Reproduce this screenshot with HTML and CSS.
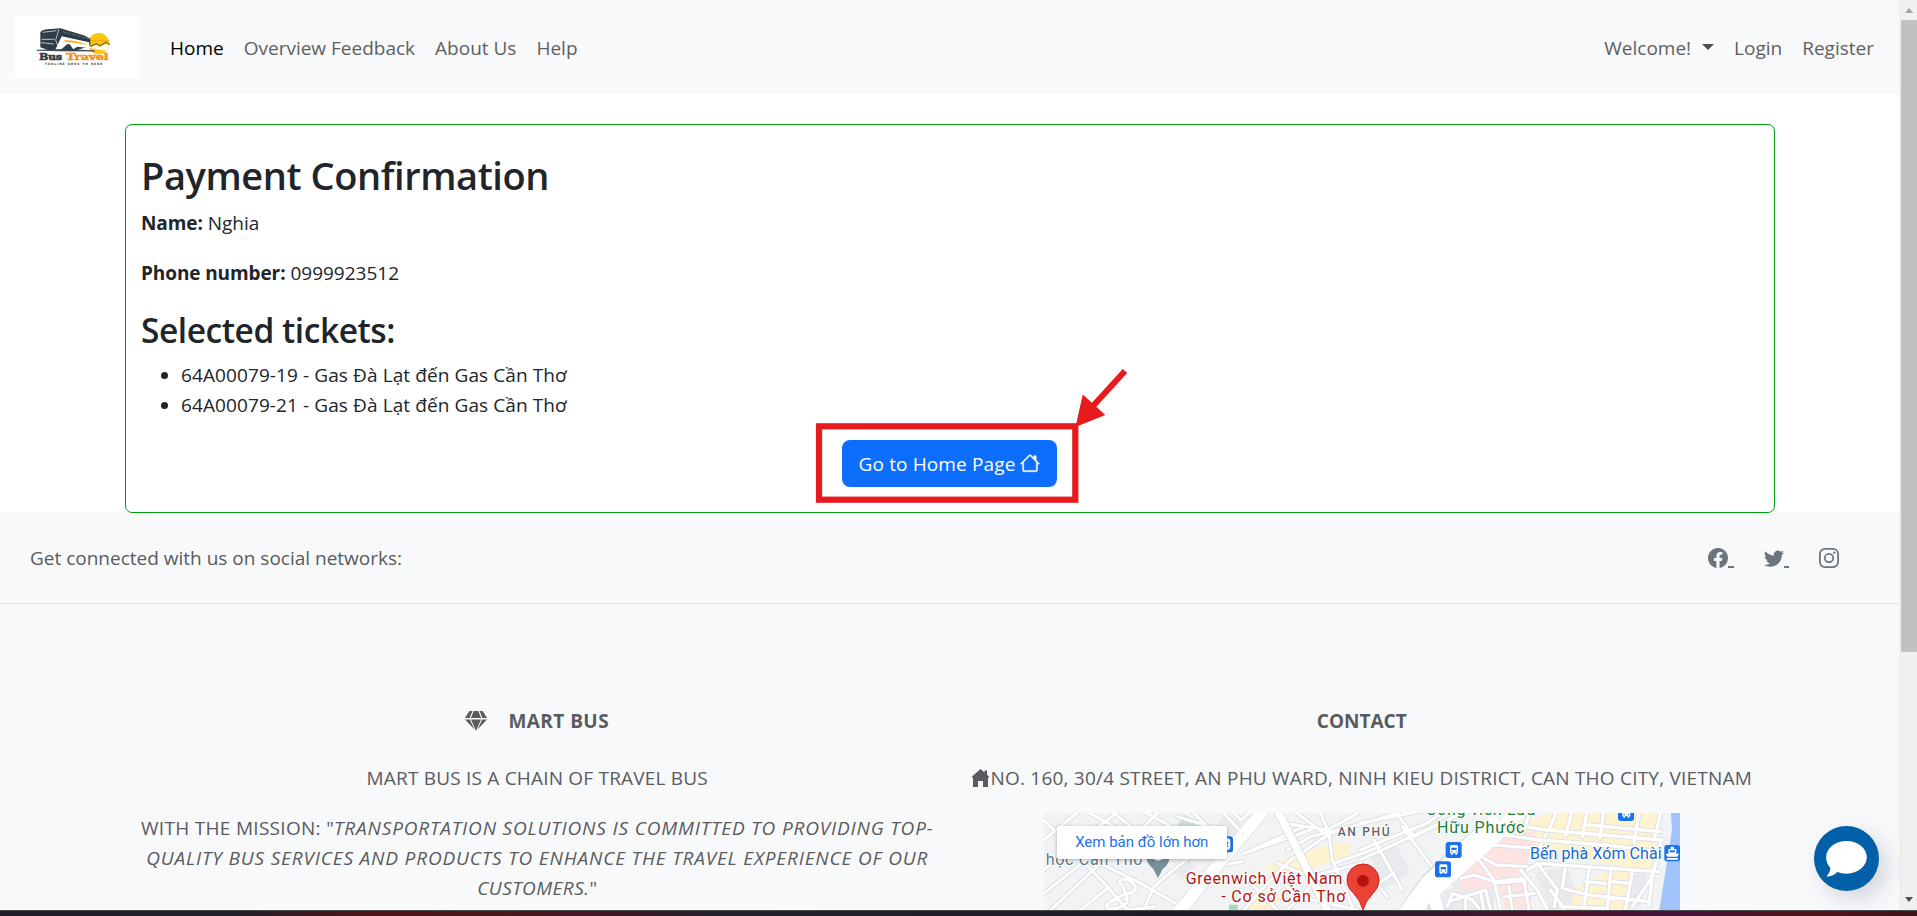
FILE: index.html
```html
<!DOCTYPE html>
<html lang="en">
<head>
<meta charset="utf-8">
<title>Payment Confirmation</title>
<link rel="stylesheet" href="styles.css">
</head>
<body>
<div class="window">
  <div class="viewport">
    <div class="page">
      <nav class="navbar">
        <svg class="logo" viewBox="0 0 375 189">
          <rect width="375" height="189" fill="#fff"/>
          <circle cx="251" cy="86" r="32" fill="#fdc70c"/>
          <path d="M219 77h64M222 98h58" stroke="#f9a51a" stroke-width="3"/>
          <path d="M222 99l20-8 12 5 20-9 10 6-10 14z" fill="#fff"/>
          <path d="M226 94l18-8 11 6 18-10 12 7" fill="none" stroke="#2d3e4a" stroke-width="2.500"/>
          <path d="M76 52q5-8 22-9l38-3 70 21 20 10v22l-40 12H98l-22-8z" fill="#2d3e4a"/>
          <path d="M140 64l82 18 3 17-38-4-12 8-10-14-12 2-14 12-18 1z" fill="#fff"/>
          <path d="M148 76q36-1 72 14-40-8-72-10z" fill="#fbaf17"/>
          <path d="M132 43l-10 32 6 16M83 52l42-5M80 73h38M78 83l38 4" fill="none" stroke="#fff" stroke-width="2"/>
          <path d="M143 50l78 22" stroke="#77838b" stroke-width="2" stroke-dasharray="12 3"/>
          <circle cx="160" cy="94" r="7" fill="#2d3e4a"/>
          <path d="M65 106q80-5 174 2-90 1-174-2z" fill="#2d3e4a" stroke="#2d3e4a" stroke-width="2"/>
          <text class="logo-name" x="73" y="135" textLength="68" lengthAdjust="spacingAndGlyphs" fill="#2d3e4a" stroke="#2d3e4a">Bus</text>
          <text class="logo-name" x="154" y="135" textLength="126" lengthAdjust="spacingAndGlyphs" fill="#f7931e" stroke="#f7931e">Travel</text>
          <text class="logo-tag" x="90" y="149" textLength="172">TAGLINE GOES TO HERE</text>
        </svg>
        <div class="nav-links">
          <a class="active">Home</a><a>Overview Feedback</a><a>About Us</a><a>Help</a>
        </div>
        <div class="nav-user">
          <a class="welcome"><span>Welcome!</span><i class="caret"></i></a><a>Login</a><a>Register</a>
        </div>
      </nav>

      <main class="card">
        <h1>Payment Confirmation</h1>
        <p><b>Name:</b> <span>Nghia</span></p>
        <p><b>Phone number:</b> <span>0999923512</span></p>
        <h3>Selected tickets:</h3>
        <ul>
          <li>64A00079-19 - Gas Đà Lạt đến Gas Cần Thơ</li>
          <li>64A00079-21 - Gas Đà Lạt đến Gas Cần Thơ</li>
        </ul>
        <div class="actions">
          <a class="btn"><span>Go to Home Page</span>
            <svg viewBox="0 0 16 16" fill="currentColor"><path d="M8.707 1.5a1 1 0 0 0-1.414 0L.646 8.146a.5.5 0 0 0 .708.708L2 8.207V13.500A1.500 1.500 0 0 0 3.500 15h9a1.500 1.500 0 0 0 1.500-1.500V8.207l.646.647a.5.5 0 0 0 .708-.708L13 5.793V2.500a.5.5 0 0 0-.5-.5h-1a.5.5 0 0 0-.5.5v1.293zM13 7.207V13.500a.5.5 0 0 1-.5.5h-9a.5.5 0 0 1-.5-.5V7.207l5-5z" stroke="currentColor" stroke-width=".3"/></svg>
          </a>
          <svg class="annotation" viewBox="0 0 320 140">
            <rect x="4" y="57.300" width="256.300" height="73.400" fill="none" stroke="#e71a1d" stroke-width="6.200"/>
            <path d="M310 2L278 37" stroke="#e71a1d" stroke-width="6"/>
            <path d="M260.500 58l7.300-32.500 22.500 20.500z" fill="#e71a1d"/>
          </svg>
        </div>
      </main>

      <footer>
        <section class="social">
          <span>Get connected with us on social networks:</span>
          <div class="social-icons">
            <a><svg viewBox="0 0 16 16"><path d="M16 8.049c0-4.446-3.582-8.050-8-8.050C3.580 0-.002 3.603-.002 8.050c0 4.017 2.926 7.347 6.750 7.951v-5.625h-2.030V8.050H6.750V6.275c0-2.017 1.195-3.131 3.022-3.131.876 0 1.791.157 1.791.157v1.980h-1.009c-.993 0-1.303.621-1.303 1.258v1.510h2.218l-.354 2.326H9.250V16c3.824-.604 6.750-3.934 6.750-7.951"/></svg><i></i></a>
            <a><svg viewBox="0 0 16 16"><path d="M5.026 15c6.038 0 9.341-5.003 9.341-9.334q.002-.211-.006-.422A6.700 6.700 0 0 0 16 3.542a6.700 6.700 0 0 1-1.889.518 3.300 3.300 0 0 0 1.447-1.817 6.500 6.500 0 0 1-2.087.793A3.286 3.286 0 0 0 7.875 6.030a9.320 9.320 0 0 1-6.767-3.429 3.290 3.290 0 0 0 1.018 4.382A3.300 3.300 0 0 1 .640 6.575v.045a3.290 3.290 0 0 0 2.632 3.218 3.200 3.200 0 0 1-.865.115 3 3 0 0 1-.614-.057 3.280 3.280 0 0 0 3.067 2.277A6.600 6.600 0 0 1 .780 13.580a6 6 0 0 1-.780-.045A9.340 9.340 0 0 0 5.026 15"/></svg><i></i></a>
            <a><svg viewBox="0 0 16 16"><rect x=".72" y=".72" width="14.560" height="14.560" rx="4" fill="none" stroke="currentColor" stroke-width="1.440"/><circle cx="8" cy="8" r="3.380" fill="none" stroke="currentColor" stroke-width="1.440"/><circle cx="12.270" cy="3.730" r=".96"/></svg></a>
          </div>
        </section>

        <section class="columns">
          <div class="col about">
            <h6><svg viewBox="0 0 22 20"><path d="M4.300 0L0 7h4.600L7.500 0zM8.700 0L5.900 7h10.200L13.300 0zM14.500 0l2.900 7H22l-4.300-7zM0 8.400L9.500 18.500 4.800 8.400zM6 8.400L11 20l5-11.600zM17.200 8.400l-4.700 10.100L22 8.400z"/></svg><span>MART BUS</span></h6>
            <p class="lead">MART BUS IS A CHAIN OF TRAVEL BUS</p>
            <p class="mission">WITH THE MISSION: "<em>TRANSPORTATION SOLUTIONS IS COMMITTED TO PROVIDING TOP-<br>QUALITY BUS SERVICES AND PRODUCTS TO ENHANCE THE TRAVEL EXPERIENCE OF OUR<br><span class="last-word">CUSTOMERS.</span></em>"</p>
          </div>
          <div class="col contact">
            <h6>CONTACT</h6>
            <p class="address"><svg viewBox="0 0 17 18"><path d="M8.500 0L0 7.500 1 9.500V18h5v-6h5v6h5V9.500l1-2-2-1.800V1.500h-2.500V3.500z"/></svg><span>NO. 160, 30/4 STREET, AN PHU WARD, NINH KIEU DISTRICT, CAN THO CITY, VIETNAM</span></p>
            <div class="map">
              <svg viewBox="0 9 1908 291">
                <defs>
                  <g id="bus"><rect width="48" height="48" rx="8" fill="#1a73e8"/><path d="M13 14q0-5 5-5h14q5 0 5 5v20h-3v4h-5v-4h-8v4h-5v-4h-3z" fill="#fff"/><path d="M17 17h16v7H17z" fill="#1a73e8"/><circle cx="18.500" cy="29" r="2.200" fill="#1a73e8"/><circle cx="31.500" cy="29" r="2.200" fill="#1a73e8"/></g>
                  <g id="minor">
                    <path d="M0 30L60 92 190 230 250 300M0 90L110 0M0 180L70 120 230 0M0 250L150 130M20 300L180 150 300 50M170 160L290 220 430 300M110 300L190 235M230 60L120 0M290 0L420 70M300 300L330 230 400 170 480 110 500 60 440 0M250 300L330 290M400 20L530 60M350 0L300 50M200 0L260 50"/>
                    <path d="M235 225q-20-10 5-18 25 2 35 25-5 22-30 18zM245 250l-30 18q-40 15-20 28 25 5 55-18z"/>
                    <path d="M540 10l50 55M560 0l30 30 40-30M600 130l180-80M800 60L600 130M500 170l95-15M600 300l60-70 80-80 120-80 200-60M730 120L800 80 960 40M830 10l25 60 10 80 60 140M720 40l130 20 90-50M760 10l80 60M700 160l100 40 150-40M620 220l80 80M700 200l60 60 180 40M830 200l-60 60-40 40M870 160l140-50"/>
                    <path d="M948 120l200-80 60-40M948 150l110-50 130-60M990 90l85 150M1075 50l110 150M1050 0l60 80 140-70M948 40l200-40M1030 260l-80-100M948 260l100-70"/>
                    <path d="M1210 290l15-40 60 20 20 25M1215 275l110-35 15 60M1265 260v40M1310 250l10 50M1295 130l50-25 140 10 30-60M1295 130l60 35 100 5M1290 130l60 80 20 90M1250 205l40-10 60 20 90-10M1350 220l120-10M1395 230l10 70M1440 210l15 90M1380 260l100-10"/>
                  </g>
                  <g id="grid">
                    <path d="M1345 70l140 20 200 15 160 20M1385 40l120 20 170 15 180 15M1515 60l25-60M1565 75l20-75M1615 80l15-80M1668 85l12-85M1770 100l15-95M1830 90l20-80M1460 0l-20 60M1630 45l220 20M1450 180l35-20 60 5 300 20M1430 180l50 60 30 60M1480 160l60 80-10 50M1565 165l-10 70 80 20 180 20M1635 180l-15 110M1700 185l-10 110M1765 185l-20 110M1850 100l-25 100-60 90M1825 195l-10 90M1520 240l40 55M1700 215l60 5M1625 215l60 5M1550 290l130 5"/>
                  </g>
                </defs>
                <rect y="9" width="1908" height="291" fill="#f1f3f4"/>
                <g fill="#e8eaed"><path d="M390 185l45-35 20 20-40 40zM510 60l35-50 50 35-35 50zM1190 200l60-60 70 60-50 60zM1470 190l100-20 40 110-90 20zM1700 200l110-10-20 100h-90zM980 130l80-20 40 80-90 50zM1150 250l200-40v90h-200z"/></g>
                <path d="M395 55l25-41 70 40-20 25z" fill="#c3e6cd"/>
                <path d="M660 170l90-35 120-36 50 4-10 40-120 35-90 20zM590 300l60-60 60 20-20 40zM1400 45l140-40h300l-15 180-120-20-260-60zM1590 235l120-60 60 20-30 105h-160z" fill="#fdf3d0"/>
                <path d="M1250 190l120-110 105-20-30 120 20 120h-80l-20-70-115 12z" fill="#fde4e2"/>
                <path d="M1908 0h-28l4 60-38 240h62z" fill="#a1c3fb"/>
                <g fill="none" stroke-linejoin="round" stroke-linecap="round">
                  <use href="#minor" stroke="#d9dce1" stroke-width="14"/><use href="#minor" stroke="#fff" stroke-width="9"/>
                  <use href="#grid" stroke="#dadce0" stroke-width="15"/><use href="#grid" stroke="#fff" stroke-width="10"/>
                  <path d="M400 310L660 0M1340 40L1150 210 1080 310M1160 230l15 80" stroke="#dadde2" stroke-width="40"/>
                  <path d="M700 0L850 300" stroke="#dadde2" stroke-width="28"/>
                  <path d="M400 310L660 0M1345 35L1150 215 1080 310M1160 220l20 80" stroke="#fff" stroke-width="36"/>
                  <path d="M700 0L850 300" stroke="#fff" stroke-width="23"/>
                  <path d="M1090 310L1350 80 1430 0" stroke="#fff" stroke-width="42"/>
                </g>
                <path d="M555 284h26v16h-26z" fill="#a8dab5"/>
                <path d="M308 147h68q-3 18-20 30l-14 27-14-27q-17-14-20-30z" fill="#78909c"/><path d="M328 147q14 10 28 0z" fill="#fff"/>
                <g class="map-text">
                  <text x="5" y="166" textLength="290" fill="#5b7d8b">học Cần Thơ</text>
                  <use href="#bus" x="519" y="79"/>
                  <text class="area" x="881" y="78" textLength="156">AN PHÚ</text>
                  <text x="425" y="221" textLength="470" fill="#b31412">Greenwich Việt Nam</text>
                  <text x="532" y="275" textLength="372" fill="#b31412">- Cơ sở Cần Thơ</text>
                  <text x="1146" y="16" textLength="328" fill="#188038">Công viên Lưu</text>
                  <text x="1179" y="69" textLength="262" fill="#188038">Hữu Phước</text>
                  <text x="1458" y="147" textLength="395" fill="#1967d2">Bến phà Xóm Chài</text>
                </g>
                <use href="#bus" x="1205" y="96"/><use href="#bus" x="1173" y="154"/><use href="#bus" x="1722" y="-15"/>
                <rect x="1861" y="105" width="47" height="49" rx="8" fill="#1a73e8"/>
                <path d="M1880 110h10v7h7v14h8l-5 9h-30l-5-9h8v-14h7zM1868 144h34v5h-34z" fill="#fff"/><path d="M1877 121h16v6h-16z" fill="#1a73e8"/>
                <path d="M957 300q-7-28-28-50-20-18-20-40a48 48 0 0 1 96 0q0 22-20 42-20 20-28 48z" fill="#ea4335" stroke="#c5221f" stroke-width="3"/><circle cx="957" cy="212" r="18" fill="#b31412"/>
              </svg>
              <a class="map-link">Xem bản đồ lớn hơn</a>
            </div>
          </div>
        </section>
      </footer>
    </div>
    <div class="scrollbar"><i class="up"></i><div class="thumb"></div><i class="down"></i></div>
    <div class="chat"><svg viewBox="0 0 122 108"><path d="M61 0c34 0 61 22 61 49S95 98 61 98q-15 0-28-5-12 14-32 14 11-12 12-26Q0 68 0 49C0 22 27 0 61 0z" fill="#fff"/></svg></div>
  </div>
  <div class="desktop-edge"></div>
</div>
</body>
</html>
```
FILE: styles.css
```css
* { box-sizing: border-box; }
body { margin: 0; font: 19px/30px "Open Sans", "Noto Sans", sans-serif; color: #212529; background: #fff; }
.window { height: 916px; display: flex; flex-direction: column; overflow: hidden; }
.viewport { position: relative; flex: 1; min-height: 0; display: flex; overflow: hidden; }
.page { width: 1899px; height: 910px; overflow: hidden; white-space: nowrap; }
h1, h3, h6, p, ul { margin: 0; }

.navbar { height: 94px; padding: 0 25px 0 15px; display: flex; align-items: center; background: #f8f9fb; color: #5f6061; }
.logo { width: 125px; height: 63px; margin: -1px 30px 0 0; display: block; }
.logo-name { font: bold 27px "DejaVu Serif", serif; stroke-width: 2px; }
.logo-tag { font: bold 9px "DejaVu Sans", sans-serif; fill: #2d3e4a; }
.nav-links, .nav-user { display: flex; gap: 20px; padding-top: 1px; }
.nav-user { margin-left: auto; }
.active { color: #000; }
.welcome { display: flex; }
.caret { border: 6px solid transparent; border-top-color: #4f5051; border-bottom: 0; margin: 11px 0 0 11px; height: 6px; }

.card { width: 1650px; height: 389px; margin: 30px 0 0 125px; padding: 26px 15px 0; border: 1px solid #009c10; border-radius: 7px; }
h1 { font-size: 38px; line-height: 48px; font-weight: 600; margin-bottom: 9px; letter-spacing: -.42px; }
h3 { font-size: 33.500px; line-height: 42px; font-weight: 600; margin-bottom: 9px; padding-top: 1px; letter-spacing: -.45px; }
.card p { margin-bottom: 20px; }
.card b { letter-spacing: -.1px; }
ul { padding-left: 40px; margin-bottom: 20px; }
li { letter-spacing: .1px; }
.actions { position: relative; display: flex; justify-content: center; }
.btn { height: 47px; width: 215px; margin-left: -1px; padding: 1px 0 0; display: flex; align-items: center; justify-content: center; gap: 5px; background: #0d6efd; color: #fff; border-radius: 8px; letter-spacing: .13px; }
.btn svg { width: 20px; height: 20px; margin-top: -2px; }
.annotation { position: absolute; left: 674px; top: -71px; width: 320px; height: 140px; }

footer { background: #f8f9fb; color: #595b5e; height: 397px; }
.social { height: 91px; border-bottom: 1px solid #dee2e6; padding: 0 60px 0 30px; display: flex; align-items: center; justify-content: space-between; }
.social-icons { display: flex; gap: 30px; color: #6c757d; }
.social-icons a { display: flex; align-items: flex-end; height: 20px; }
.social-icons svg { width: 20px; height: 20px; fill: currentColor; }
.social-icons i { width: 5.500px; height: 2px; background: currentColor; }

.columns { display: flex; padding: 102px 125px 0; }
.col { width: 825px; padding: 0 15px; text-align: center; }
h6 { font-size: 19px; line-height: 30px; font-weight: 700; margin-bottom: 27px; }
.about h6 { display: flex; justify-content: center; gap: 21px; letter-spacing: .45px; }
.about h6 svg { width: 22px; height: 20px; margin-top: 5px; fill: #595b5e; }
.col p { margin-bottom: 20px; }
.lead { letter-spacing: .2px; }
.mission { letter-spacing: .3px; }
.mission em { letter-spacing: .84px; }
.mission .last-word { letter-spacing: .45px; }
.address { display: flex; align-items: center; justify-content: center; gap: 2px; letter-spacing: .21px; }
.address svg { width: 17px; height: 18px; fill: #595b5e; }
.map { position: relative; width: 636px; height: 97px; margin: 0 auto; overflow: hidden; }
.map > svg { width: 636px; height: 97px; display: block; }
.map-text { font: 48px Roboto, sans-serif; paint-order: stroke; stroke: #fff; stroke-width: 6px; stroke-linejoin: round; }
.map-text .area { font-size: 36px; font-weight: 500; fill: #5f6368; }
.map-link { position: absolute; left: 13px; top: 13px; width: 170px; height: 33px; background: #fff; border-radius: 2px; box-shadow: 0 1px 4px rgba(0,0,0,.3); font: 15px/33px Roboto, sans-serif; color: #1a73e8; }

.scrollbar { width: 18px; background: #f0f0f1; display: flex; flex-direction: column; align-items: flex-end; }
.up, .down { border: 4px solid transparent; margin-right: 4px; }
.up { border-top: 0; border-bottom: 5px solid #a3a3a3; margin-top: 8px; }
.down { border-bottom: 0; border-top: 5px solid #505050; margin-top: auto; margin-bottom: 8px; }
.thumb { width: 16px; height: 632px; margin-top: 7px; background: #c1c1c1; }
.chat { position: absolute; left: 1814px; top: 826px; width: 65px; height: 65px; border-radius: 50%; background: #0260a8; box-shadow: 8px 8px 22px rgba(60,70,90,.2); display: flex; align-items: center; justify-content: center; }
.chat svg { width: 41px; height: 36px; margin-top: 1px; }
.desktop-edge { height: 6px; border-top: 1px solid #4b4b50; background: linear-gradient(90deg, #1f1f28 0, #20202a 230px, #511315 380px, #49191a 500px, #461424 580px, #22222b 720px, #1c1c25 1180px, #2e1c2e 1400px, #4a1328 1560px, #43143a 1670px, #54131a 1810px, #3c1418 1917px); }
```
